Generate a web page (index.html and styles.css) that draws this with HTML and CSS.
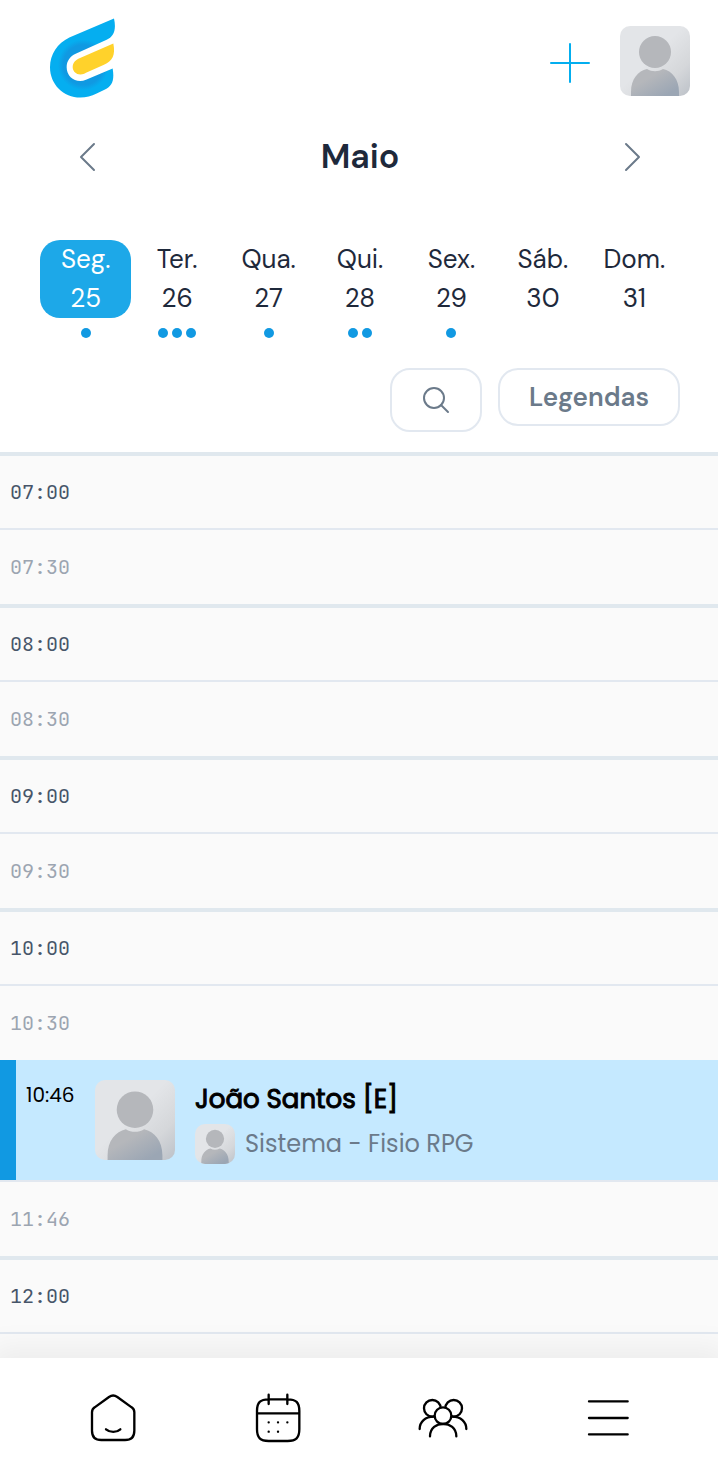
FILE: index.html
```html
<!DOCTYPE html>
<html lang="pt-BR">
<head>
    <meta charset="UTF-8">
    <meta name="viewport" content="width=device-width, initial-scale=1.0">
    <title>Agenda</title>
    <link rel="stylesheet" href="styles.css">
</head>
<body>

    <!-- Avatar padrão, reutilizado na página -->
    <svg class="defs" width="0" height="0" aria-hidden="true">
        <defs>
            <linearGradient id="avatarBg" x1="0" y1="0" x2="1" y2="1">
                <stop offset="0.45" stop-color="#e3e5e8"/>
                <stop offset="0.75" stop-color="#d5d7da"/>
                <stop offset="1" stop-color="#bcc1c8"/>
            </linearGradient>
            <linearGradient id="avatarBody" x1="0" y1="0" x2="1" y2="1">
                <stop offset="0.35" stop-color="#b5b7bb"/>
                <stop offset="0.85" stop-color="#9ba6b4"/>
            </linearGradient>
        </defs>
        <symbol id="avatar" viewBox="0 0 70 70">
            <rect width="70" height="70" fill="url(#avatarBg)"/>
            <circle cx="35" cy="26" r="16" fill="#b5b7bb"/>
            <path d="M11 70V66C11 53 18 45 27 43C32 46 38 46 43 43C52 45 59 53 59 66V70Z" fill="url(#avatarBody)"/>
        </symbol>
    </svg>

    <div class="app">
        <!-- Topo -->
        <header class="topbar">
            <a class="logo" href="#" aria-label="Início">
                <svg viewBox="60 53 198 239" aria-hidden="true">
                    <defs>
                        <radialGradient id="logoBlue" gradientUnits="userSpaceOnUse" cx="160" cy="193" r="100">
                            <stop offset="0.6" stop-color="#1099e2"/>
                            <stop offset="0.76" stop-color="#05aef0"/>
                        </radialGradient>
                    </defs>
                    <path fill="url(#logoBlue)" d="M252 54L118 111C82 128 60 163 60 200C60 251 100 291 151 291C169 291 184 287 200 279L225 267C246 256 254 240 248 204L168 238C139 250 110 230 110 200C110 182 120 168 137 160L230 118C250 109 260 90 252 54Z"/>
                    <path fill="#ffd22b" d="M250 129L145 175C118 188 126 223 152 222C158 222 163 220 168 217L222 193C247 181 257 165 250 129Z"/>
                </svg>
            </a>
            <div class="topbar-actions">
                <button class="icon-button" type="button" aria-label="Adicionar">
                    <svg class="plus" viewBox="0 0 40 40" aria-hidden="true"><path d="M20 1V39M1 20H39"/></svg>
                </button>
                <button class="icon-button" type="button" aria-label="Perfil">
                    <svg class="avatar avatar-profile" aria-hidden="true"><use href="#avatar"/></svg>
                </button>
            </div>
        </header>

        <!-- Mês -->
        <div class="month">
            <button class="icon-button" type="button" aria-label="Mês anterior">
                <svg class="chevron" viewBox="0 0 20 30" aria-hidden="true"><path d="M16 2L3 15L16 28"/></svg>
            </button>
            <h1 class="month-name">Maio</h1>
            <button class="icon-button" type="button" aria-label="Próximo mês">
                <svg class="chevron" viewBox="0 0 20 30" aria-hidden="true"><path d="M4 2L17 15L4 28"/></svg>
            </button>
        </div>

        <!-- Semana -->
        <div class="week">
            <div class="day">
                <button class="day-button active" type="button"><span>Seg.</span><span>25</span></button>
                <div class="dots"><i class="dot"></i></div>
            </div>
            <div class="day">
                <button class="day-button" type="button"><span>Ter.</span><span>26</span></button>
                <div class="dots"><i class="dot"></i><i class="dot"></i><i class="dot"></i></div>
            </div>
            <div class="day">
                <button class="day-button" type="button"><span>Qua.</span><span>27</span></button>
                <div class="dots"><i class="dot"></i></div>
            </div>
            <div class="day">
                <button class="day-button" type="button"><span>Qui.</span><span>28</span></button>
                <div class="dots"><i class="dot"></i><i class="dot"></i></div>
            </div>
            <div class="day">
                <button class="day-button" type="button"><span>Sex.</span><span>29</span></button>
                <div class="dots"><i class="dot"></i></div>
            </div>
            <div class="day">
                <button class="day-button" type="button"><span>Sáb.</span><span>30</span></button>
                <div class="dots"></div>
            </div>
            <div class="day">
                <button class="day-button" type="button"><span>Dom.</span><span>31</span></button>
                <div class="dots"></div>
            </div>
        </div>

        <div class="tools">
            <button class="tool-button search-button" type="button" aria-label="Buscar">
                <svg class="search-icon" viewBox="0 0 28 28" aria-hidden="true"><circle cx="12" cy="12" r="10"/><path d="M19 19L26 26"/></svg>
            </button>
            <button class="tool-button" type="button">Legendas</button>
        </div>

        <!-- Horários -->
        <main class="agenda">
            <div class="slot hour"><time>07:00</time></div>
            <div class="slot"><time>07:30</time></div>
            <div class="slot hour"><time>08:00</time></div>
            <div class="slot"><time>08:30</time></div>
            <div class="slot hour"><time>09:00</time></div>
            <div class="slot"><time>09:30</time></div>
            <div class="slot hour"><time>10:00</time></div>
            <div class="slot"><time>10:30</time></div>
            <a class="appointment" href="#">
                <time class="appointment-time">10:46</time>
                <svg class="avatar avatar-patient" aria-hidden="true"><use href="#avatar"/></svg>
                <div class="appointment-info">
                    <h2 class="patient">João Santos [E]</h2>
                    <div class="service">
                        <svg class="avatar avatar-staff" aria-hidden="true"><use href="#avatar"/></svg>
                        <span>Sistema - Fisio RPG</span>
                    </div>
                </div>
            </a>
            <div class="slot"><time>11:46</time></div>
            <div class="slot hour"><time>12:00</time></div>
            <div class="slot"></div>
        </main>

        <!-- Menu inferior -->
        <nav class="bottom-nav">
            <a href="#" aria-label="Início">
                <svg class="nav-icon" viewBox="0 0 162 162" aria-hidden="true">
                    <path d="M18 64C18 56 20 53 26 49L69 18C77 12 86 12 94 18L137 49C143 53 145 56 145 64V119C145 138 136 147 117 147H46C27 147 18 138 18 119Z"/>
                    <path d="M60 115C72 125 92 125 103 115"/>
                </svg>
            </a>
            <a href="#" aria-label="Agenda">
                <svg class="nav-icon" viewBox="0 0 162 162" aria-hidden="true">
                    <path d="M18 60C18 34 28 25 53 25H110C135 25 145 34 145 60V115C145 141 135 150 110 150H53C28 150 18 141 18 115ZM18 67H145M53 11V39M109 11V39"/>
                    <path d="M53 94H53.1M81 94H81.1M109 94H109.1M53 122H53.1M81 122H81.1"/>
                </svg>
            </a>
            <a href="#" aria-label="Pacientes">
                <svg class="nav-icon" viewBox="0 0 162 162" aria-hidden="true">
                    <circle cx="49" cy="52" r="25"/>
                    <circle cx="113" cy="52" r="25"/>
                    <circle class="front" cx="81" cy="74" r="25"/>
                    <path d="M11 114C11 92 28 77 53 77M151 114C151 92 134 77 109 77M42 136C42 86 121 86 121 136"/>
                </svg>
            </a>
            <a href="#" aria-label="Menu">
                <svg class="nav-icon" viewBox="0 0 162 162" aria-hidden="true"><path d="M24 31H140M24 81H140M24 130H140"/></svg>
            </a>
        </nav>
    </div>

</body>
</html>
```
FILE: styles.css
```css
* {
    box-sizing: border-box;
}

body {
    margin: 0;
    font-family: "DM Sans", Inter, sans-serif;
    font-size: 26px;
    color: #1e293b;
    background-color: #fff;
}

a {
    color: inherit;
    text-decoration: none;
}

button {
    font: inherit;
    color: inherit;
    cursor: pointer;
}

svg {
    display: block;
    fill: none;
    stroke-linecap: round;
    stroke-linejoin: round;
}

.defs {
    position: absolute;
}

.app {
    display: flex;
    flex-direction: column;
    height: 100vh;
}

/* Topo */
.topbar {
    display: flex;
    align-items: flex-start;
    justify-content: space-between;
    padding: 18px 28px 0 50px;
}

.logo svg {
    width: 66px;
    height: 80px;
}

.topbar-actions {
    display: flex;
    align-items: center;
    gap: 30px;
    padding-top: 8px;
}

.icon-button {
    padding: 0;
    border: none;
    background: none;
}

.plus {
    width: 40px;
    height: 40px;
    margin-top: 4px;
    stroke: #03aeef;
    stroke-width: 2;
}

.avatar {
    border-radius: 10px;
}

.avatar-profile {
    width: 70px;
    height: 70px;
}

/* Mês */
.month {
    display: flex;
    align-items: center;
    justify-content: space-between;
    padding: 38px 76px 0 78px;
}

.month-name {
    margin: 0;
    font-size: 34px;
    line-height: 42px;
    font-weight: 600;
}

.chevron {
    width: 20px;
    height: 30px;
    stroke: #6b7a8a;
    stroke-width: 2;
}

/* Semana */
.week {
    display: grid;
    grid-template-columns: repeat(7, 1fr);
    padding: 62px 38px 0 40px;
}

.day-button {
    display: flex;
    flex-direction: column;
    align-items: center;
    width: 100%;
    padding: 0;
    border: none;
    border-radius: 20px;
    background: none;
    line-height: 39px;
}

.day-button.active {
    background-color: #1da8e8;
    color: #fff;
}

.dots {
    display: flex;
    justify-content: center;
    gap: 4px;
    height: 10px;
    margin-top: 10px;
}

.dot {
    width: 10px;
    height: 10px;
    border-radius: 50%;
    background-color: #1199e2;
}

.tools {
    display: flex;
    align-items: flex-start;
    justify-content: flex-end;
    gap: 16px;
    padding: 30px 38px 20px;
}

.tool-button {
    padding: 8px 29px;
    border: 2px solid #e2e8f0;
    border-radius: 20px;
    background-color: #fff;
    color: #6b7a8a;
    line-height: 38px;
    font-weight: 600;
}

.search-button {
    padding: 16px 30px;
}

.search-icon {
    width: 28px;
    height: 28px;
    stroke: #6b7a8a;
    stroke-width: 2;
}

/* Horários */
.agenda {
    flex: 1;
    min-height: 0;
    overflow-y: auto;
    scrollbar-width: none;
    background-color: #fafafa;
}

.slot {
    display: flex;
    align-items: center;
    height: 76px;
    padding: 0 10px;
    border-top: 2px solid #e2e8f0;
    font-family: "JetBrains Mono", "Liberation Mono", monospace;
    font-size: 20px;
    color: #9ca5b1;
}

.slot.hour {
    border-top: 4px solid #e0e8ee;
    color: #475569;
}

.appointment {
    display: flex;
    align-items: flex-start;
    padding: 20px 20px 15px 10px;
    border-left: 16px solid #1199e2;
    background-color: #c5e9ff;
    color: #000;
    font-family: Poppins, Inter, sans-serif;
}

.appointment-time {
    flex: 0 0 69px;
    font-size: 20px;
    line-height: 30px;
}

.avatar-patient {
    flex: none;
    width: 80px;
    height: 80px;
    margin-right: 20px;
}

.patient {
    margin: 0;
    font-size: 26px;
    line-height: 39px;
    font-weight: 400;
    -webkit-text-stroke: 1px #000;
}

.service {
    display: flex;
    align-items: center;
    gap: 10px;
    padding-top: 4px;
    font-size: 24px;
    line-height: 42px;
    color: #6b7a8a;
}

.avatar-staff {
    width: 40px;
    height: 40px;
}

/* Menu inferior */
.bottom-nav {
    position: relative;
    display: grid;
    grid-template-columns: repeat(4, 1fr);
    justify-items: center;
    padding: 33px 28px 31px 30px;
    background-color: #fff;
    box-shadow: 0 0 30px 10px rgba(0, 0, 0, 0.06);
}

.nav-icon {
    width: 54px;
    height: 54px;
    stroke: #000;
    stroke-width: 7;
}

.nav-icon .front {
    fill: #fff;
}
```
